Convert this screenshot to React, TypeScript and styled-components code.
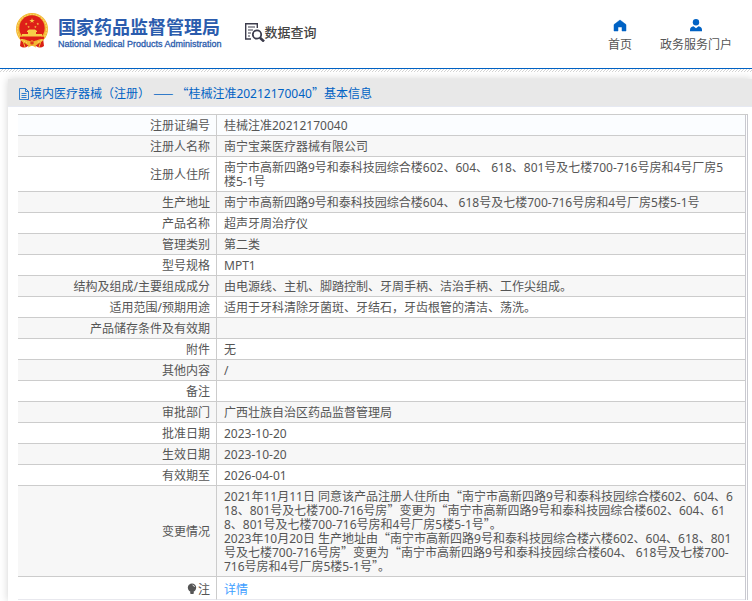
import React from "react";
import styled, { createGlobalStyle } from "styled-components";

const GlobalStyle = createGlobalStyle`
  *, *::before, *::after { box-sizing: border-box; }
  html { background: #fff; }
  body {
    margin: 0;
    color: #555;
    font: 12px/14px "Noto Sans", "Noto Sans CJK SC", sans-serif;
    overflow: hidden;
  }
`;

const Page = styled.div`
  display: flex;
  flex-direction: column;
  min-height: 100vh;
`;

const Header = styled.header`
  display: flex;
  justify-content: space-between;
  align-items: flex-start;
  height: 69px;
  padding: 0 20px 0 16px;
  border-bottom: 1px solid #0062c4;
`;

const Hatching = styled.div`
  height: 3px;
  background: linear-gradient(135deg, #fff 38%, #d4d4d4 38% 62%, #fff 62%) 0 0 / 3px 3px;
`;

const Brand = styled.div`
  display: flex;
  padding-top: 13px;
`;

const BrandLink = styled.a`
  display: flex;
  gap: 10px;
  color: #2b5cad;
  text-decoration: none;
  white-space: nowrap;
`;

const BrandName = styled.span`
  display: block;
  padding-top: 3px;
  font: 700 18px/20px "Noto Sans CJK SC", sans-serif;
`;

const BrandEnglish = styled.span`
  display: block;
  padding-top: 2px;
  font: 400 9px/12px "Liberation Sans", sans-serif;
  -webkit-text-stroke: 0.3px currentColor;
`;

const QueryTitle = styled.h1`
  display: flex;
  align-items: center;
  height: 20px;
  margin: 9px 0 0 22px;
  color: #444;
  font: 500 13px/18px "Noto Sans CJK SC", sans-serif;
  white-space: nowrap;
`;

const Nav = styled.nav`
  display: flex;
  gap: 28px;
  padding-top: 18px;
`;

const NavLink = styled.a`
  display: flex;
  flex-direction: column;
  align-items: center;
  gap: 6px;
  color: #555;
  text-decoration: none;
  white-space: nowrap;
`;

const Panel = styled.main`
  flex: 1;
  margin: 7px 0 0 8px;
  background: #fff;
  box-shadow: 0 0 8px rgba(0, 0, 0, 0.18);
`;

const PanelTitle = styled.h2`
  display: flex;
  align-items: center;
  height: 28px;
  margin: 0;
  padding: 2px 10px 0;
  background: #e8e8e8;
  border-bottom: 1px solid #e6e9f2;
  color: #0062c4;
  font-size: 12px;
  font-weight: 400;
  white-space: pre;
`;

const TableFrame = styled.div`
  margin: 7px 4px 0 10px;
  padding-right: 1px;
  border-top: 1px solid #ccc;
  border-right: 1px solid #c9c9d0;
`;

const Table = styled.table`
  width: 100%;
  border-collapse: separate;
  border-spacing: 0;
  border-right: 1px solid #c9c9d0;
  table-layout: fixed;
`;

const Row = styled.tr`
  background: #fff;
  &:nth-child(even) { background: #f7f7f7; }
  &:first-child { background: #fbfdff; }
  &:last-child { background: #fff; }
  &:last-child > * {
    padding-top: 5px;
    padding-bottom: 1px;
    border-bottom-color: #e8e8ee;
    line-height: 16px;
  }
`;

const Label = styled.th`
  width: 199px;
  padding: 4px 6px 2px;
  border-right: 1px solid #ccc;
  border-bottom: 1px solid #ccc;
  font-weight: 400;
  text-align: right;
`;

const Value = styled.td`
  height: 21px;
  padding: 4px 7px 2px;
  border-bottom: 1px solid #ccc;
  white-space: nowrap;
`;

const Line = styled.div``;

const WideMark = styled.span`
  font-family: "Noto Sans CJK SC", sans-serif;
  line-height: 0;
`;

const DetailLink = styled.a`
  color: #409eff;
  text-decoration: none;
`;

const Bulb = styled.svg`
  margin-right: 1px;
  vertical-align: -1px;
`;

function Prose({ text }: { text: string }) {
  return (
    <>
      {text.split(/([“”—]+)/).map((part, i) =>
        /[“”—]/.test(part) ? <WideMark key={i}>{part}</WideMark> : part
      )}
    </>
  );
}

const records: [string, string[]][] = [
  ["注册证编号", ["桂械注准20212170040"]],
  ["注册人名称", ["南宁宝莱医疗器械有限公司"]],
  ["注册人住所", [
    "南宁市高新四路9号和泰科技园综合楼602、604、 618、801号及七楼700-716号房和4号厂房5",
    "楼5-1号",
  ]],
  ["生产地址", ["南宁市高新四路9号和泰科技园综合楼604、 618号及七楼700-716号房和4号厂房5楼5-1号"]],
  ["产品名称", ["超声牙周治疗仪"]],
  ["管理类别", ["第二类"]],
  ["型号规格", ["MPT1"]],
  ["结构及组成/主要组成成分", ["由电源线、主机、脚踏控制、牙周手柄、洁治手柄、工作尖组成。"]],
  ["适用范围/预期用途", ["适用于牙科清除牙菌斑、牙结石，牙齿根管的清洁、荡洗。"]],
  ["产品储存条件及有效期", []],
  ["附件", ["无"]],
  ["其他内容", ["/"]],
  ["备注", []],
  ["审批部门", ["广西壮族自治区药品监督管理局"]],
  ["批准日期", ["2023-10-20"]],
  ["生效日期", ["2023-10-20"]],
  ["有效期至", ["2026-04-01"]],
  ["变更情况", [
    "2021年11月11日 同意该产品注册人住所由“南宁市高新四路9号和泰科技园综合楼602、604、6",
    "18、801号及七楼700-716号房”变更为“南宁市高新四路9号和泰科技园综合楼602、604、61",
    "8、801号及七楼700-716号房和4号厂房5楼5-1号”。",
    "2023年10月20日 生产地址由“南宁市高新四路9号和泰科技园综合楼六楼602、604、618、801",
    "号及七楼700-716号房”变更为“南宁市高新四路9号和泰科技园综合楼604、 618号及七楼700-",
    "716号房和4号厂房5楼5-1号”。",
  ]],
];

function Emblem() {
  const star = "M0-1L.23-.31.95-.31.36.12.59.81 0 .38-.59.81-.36.12-.95-.31-.23-.31Z";
  return (
    <svg width="32" height="36" viewBox="0 0 32 36" aria-hidden="true">
      <path d="M5 25L4 33Q8 36 12 33L16 31 20 33Q24 36 28 33L27 25Z" fill="#d92015" />
      <circle cx="16" cy="16" r="16" fill="#f2b632" />
      <circle cx="16" cy="16" r="14.6" fill="none" stroke="#f9d663" strokeWidth="1.2" strokeDasharray="2 1" />
      <circle cx="16" cy="15" r="12.7" fill="#de1f18" />
      <g fill="#f7cf49">
        <path d={star} transform="translate(16 7.8) scale(2.8)" />
        <path d={star} transform="translate(10.2 11) scale(1.4)" />
        <path d={star} transform="translate(12.6 14) scale(1.3)" />
        <path d={star} transform="translate(19.4 14) scale(1.3)" />
        <path d={star} transform="translate(21.8 11) scale(1.4)" />
        <path d="M11 18L13 16.5H19L21 18V19H20V21H26V23.5H6V21H12V19H11Z" />
      </g>
      <path d="M4 25Q10 24 16 29 22 24 28 25" fill="none" stroke="#de1f18" strokeWidth="2.4" />
      <path d="M10 31L12 27.5 14.5 28.5 16 27 17.5 28.5 20 27.5 22 31 19 33H13Z" fill="#f2b632" />
      <circle cx="16" cy="30" r="1.8" fill="#de3a1c" />
      <path d="M7 28L9 34M25 28L23 34M12 34L16 32 20 34" fill="none" stroke="#f2b632" />
    </svg>
  );
}

export default function App() {
  return (
    <Page>
      <GlobalStyle />
      <Header>
        <Brand>
          <BrandLink href="#">
            <Emblem />
            <span>
              <BrandName>国家药品监督管理局</BrandName>
              <BrandEnglish>National Medical Products Administration</BrandEnglish>
            </span>
          </BrandLink>
          <QueryTitle>
            <svg width="21" height="20" viewBox="0 0 21 20" fill="none" stroke="#3c3c4c" strokeWidth="1.4" aria-hidden="true">
              <path d="M7 17H1.7V1.7H13.3V6" />
              <path d="M4 5H11M4 8H9M4 11H7M4 14H6" strokeWidth="1.2" />
              <circle cx="13" cy="12.5" r="4.2" strokeWidth="1.8" />
              <path d="M16 15.8L20 19.5" strokeWidth="2.6" />
            </svg>
            数据查询
          </QueryTitle>
        </Brand>
        <Nav>
          <NavLink href="#">
            <svg width="14" height="14" viewBox="0 0 14 14" fill="#0062c4" aria-hidden="true">
              <path d="M7 2L13 6.6V13H9V9H5V13H1V6.6Z" stroke="#0062c4" strokeWidth=".5" strokeLinejoin="round" />
            </svg>
            首页
          </NavLink>
          <NavLink href="#">
            <svg width="14" height="14" viewBox="0 0 14 14" fill="#0062c4" aria-hidden="true">
              <circle cx="7" cy="4.2" r="3.2" />
              <path d="M1 13.2V12Q1 8.7 4.5 8.2L7 10.2 9.5 8.2Q13 8.7 13 12V13.2Z" />
            </svg>
            政务服务门户
          </NavLink>
        </Nav>
      </Header>
      <Hatching />
      <Panel>
        <PanelTitle>
          <svg width="12" height="12" viewBox="0 0 12 12" fill="none" stroke="#0062c4" aria-hidden="true">
            <path d="M1.5.5H7.5L10.5 3.5V11.5H1.5ZM7.5.5V3.5H10.5M3.5 5.5H8.5M3.5 7.5H8.5M3.5 9.5H8.5" strokeWidth=".8" />
          </svg>
          <span><Prose text="境内医疗器械（注册） —— “桂械注准20212170040”基本信息" /></span>
        </PanelTitle>
        <TableFrame>
          <Table>
            <tbody>
              {records.map(([label, lines]) => (
                <Row key={label}>
                  <Label scope="row">{label}</Label>
                  <Value>
                    {lines.map((line) => (
                      <Line key={line}><Prose text={line} /></Line>
                    ))}
                  </Value>
                </Row>
              ))}
              <Row>
                <Label scope="row">
                  <Bulb width="10" height="12" viewBox="0 0 10 12" aria-hidden="true">
                    <circle cx="5" cy="4.7" r="4.2" fill="#555" />
                    <path d="M3 8.5H7L6.5 11H3.5Z" fill="#555" />
                    <path d="M5.5 2Q7.2 2.3 7.5 4" fill="none" stroke="#fff" strokeWidth=".8" />
                  </Bulb>
                  注
                </Label>
                <Value><DetailLink href="#">详情</DetailLink></Value>
              </Row>
            </tbody>
          </Table>
        </TableFrame>
      </Panel>
    </Page>
  );
}
